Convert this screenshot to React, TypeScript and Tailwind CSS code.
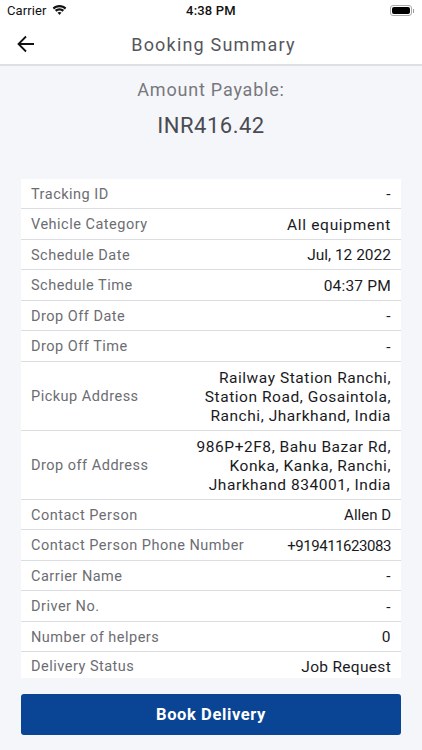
import React from "react";

const rows = [
  { label: "Tracking ID", value: "-", h: "h-[30px] pt-[2px]" },
  { label: "Vehicle Category", value: "All equipment", h: "h-[31px] pt-[2px]", fit: "text-[15.500px] tracking-[0.7px]" },
  { label: "Schedule Date", value: "Jul, 12 2022", h: "h-[30px] pt-[2px]", fit: "text-[15.500px] tracking-[0px]" },
  { label: "Schedule Time", value: "04:37 PM", h: "h-[31px] pt-[2px]", fit: "text-[15.500px] tracking-[0.2px]" },
  { label: "Drop Off Date", value: "-", h: "h-[30px] pt-[2px]" },
  { label: "Drop Off Time", value: "-", h: "h-[31px] pt-[2px]" },
  {
    label: "Pickup Address",
    value: ["Railway Station Ranchi,", "Station Road, Gosaintola,", "Ranchi, Jharkhand, India"],
    h: "h-[69px] pt-[2px]",
  },
  {
    label: "Drop off Address",
    value: ["986P+2F8, Bahu Bazar Rd,", "Konka, Kanka, Ranchi,", "Jharkhand 834001, India"],
    h: "h-[69px] pt-[2px]",
  },
  { label: "Contact Person", value: "Allen D", h: "h-[30px] pt-[2px]", fit: "text-[15px] tracking-[0px]" },
  { label: "Contact Person Phone Number", value: "+919411623083", h: "h-[31px] pt-[2px]", fit: "text-[15px] tracking-[-0.45px]" },
  { label: "Carrier Name", value: "-", h: "h-[30px] pt-[2px]" },
  { label: "Driver No.", value: "-", h: "h-[31px] pt-[2px]" },
  { label: "Number of helpers", value: "0", h: "h-[30px] pt-[2px]" },
  { label: "Delivery Status", value: "Job Request", h: "h-[26px] pt-[4px]", last: true, fit: "text-[15.500px] tracking-[0.3px]" },
];

const StatusBar = () => (
  <div className="h-[21px] flex items-center justify-between pl-[7px] pr-[8px] text-[#111] text-[13px] relative">
    <div className="flex items-center gap-[5px]">
      <span className="tracking-[0.1px]">Carrier</span>
      <svg width="15" height="11" viewBox="0 0 16 12" fill="#111">
        <path d="M8 2.500c2.300 0 4.300.9 5.800 2.300l1.700-1.800C13.500 1.100 10.900 0 8 0S2.500 1.100.5 3l1.700 1.800C3.700 3.400 5.700 2.500 8 2.500z" />
        <path d="M8 6c1.300 0 2.400.5 3.300 1.300L13 5.500C11.600 4.300 9.900 3.500 8 3.500s-3.600.8-5 2l1.700 1.800C5.600 6.500 6.700 6 8 6z" />
        <path d="M8 7.500c-.9 0-1.600.3-2.200.8L8 11l2.200-2.700c-.6-.5-1.300-.8-2.200-.8z" />
      </svg>
    </div>
    <span className="absolute left-0 right-0 text-center font-medium tracking-[0.2px]">4:38 PM</span>
    <div className="flex items-center gap-[1px]">
      <div className="w-[22px] h-[11px] rounded-[3px] border border-[#aaa] p-[1px]">
        <div className="w-full h-full rounded-[2px] bg-black" />
      </div>
      <div className="w-[1px] h-[4px] bg-[#999]" />
    </div>
  </div>
);

export default function App() {
  return (
    <div className="w-[422px] h-[750px] overflow-hidden flex flex-col bg-[#f5f6fa] font-['Roboto',sans-serif]">
      <div className="bg-white">
        <StatusBar />
        <div className="h-[43px] flex items-center justify-center relative pt-[3px] pl-[5px]">
          <svg className="absolute left-[17px] top-[14px]" width="18" height="18" viewBox="0 0 18 18" fill="none" stroke="#111" strokeWidth="1.800">
            <path d="M17 9H1.500M9 1.500 1.500 9 9 16.500" />
          </svg>
          <span className="text-[18px] tracking-[1.2px] text-[#55565c]">Booking Summary</span>
        </div>
      </div>
      <div className="h-[2px] bg-[#dfe0e3]" />
      <div className="flex flex-col items-center">
        <div className="mt-[12px] text-[18px] tracking-[0.8px] text-[#77787d] leading-[24px]">Amount Payable:</div>
        <div className="mt-[10px] text-[22px] tracking-[0.5px] text-[#4a4b52] leading-[28px]">INR416.42</div>
      </div>
      <div className="mt-[39px] mx-[21px] bg-white">
        {rows.map((r) => (
          <div
            key={r.label}
            className={`${r.h} px-[10px] flex items-center justify-between ${r.last ? "" : "border-b border-[#dcdde0]"}`}
          >
            <span className="text-[14.500px] tracking-[0.5px] text-[#6c6d72]">{r.label}</span>
            <span className={`leading-[19px] text-right text-[#1a1a1e] ${r.fit ?? "text-[15.500px] tracking-[0.55px]"}`}>
              {Array.isArray(r.value) ? r.value.map((l) => <div key={l}>{l}</div>) : r.value}
            </span>
          </div>
        ))}
      </div>
      <div className="mt-[16px] mx-[21px] h-[41px] pt-[1px] rounded-[3px] bg-[#0a4595] flex items-center justify-center">
        <span className="text-[16.500px] font-bold tracking-[0.6px] text-white">Book Delivery</span>
      </div>
    </div>
  );
}
